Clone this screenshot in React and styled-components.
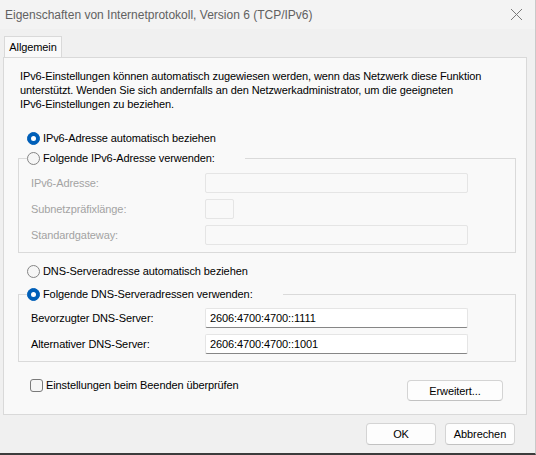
import React from "react";
import styled, { createGlobalStyle } from "styled-components";

const GlobalStyle = createGlobalStyle`
  html, body {
    margin: 0;
    padding: 0;
    background: #f0f0f0;
  }
  body {
    font-family: "Liberation Sans", Arial, sans-serif;
    font-size: 11px;
    letter-spacing: -0.1px;
    color: #000;
  }
`;

const Window = styled.div`
  width: 536px;
  height: 455px;
  box-sizing: border-box;
  background: #f0f0f0;
  display: flex;
  flex-direction: column;
  border-right: 1px solid #c9c9c9;
  border-bottom: 2px solid #3c3c3c;
  overflow: hidden;
`;

const TitleBar = styled.div`
  height: 29px;
  flex-shrink: 0;
  display: flex;
  align-items: center;
  justify-content: space-between;
  padding: 0 12px 0 5px;
  background: #f3f3f3;
  color: #616161;
  font-size: 12px;
  letter-spacing: 0;
`;

const CloseButton = styled.div`
  width: 14px;
  height: 14px;
  display: flex;
  align-items: center;
  justify-content: center;
`;

const Body = styled.div`
  padding: 7px 8px 0 3px;
  display: flex;
  flex-direction: column;
`;

const TabStrip = styled.div`
  display: flex;
  padding-left: 1px;
  height: 21px;
`;

const Tab = styled.div`
  position: relative;
  z-index: 1;
  width: 58px;
  height: 21px;
  display: flex;
  align-items: center;
  justify-content: center;
  background: #f9f9f9;
  border: 1px solid #d9d9d9;
  border-bottom: none;
  box-sizing: border-box;
  margin-bottom: -1px;
`;

const Panel = styled.div`
  height: 358px;
  box-sizing: border-box;
  border: 1px solid #d9d9d9;
  background: #f9f9f9;
  padding: 11px 0 0 14px;
  display: flex;
  flex-direction: column;
`;

const Intro = styled.p`
  margin: 0 0 0 2px;
  line-height: 14px;
  white-space: nowrap;
`;

const OptionRow = styled.label`
  display: flex;
  align-items: center;
  height: 16px;
  gap: 3px;
  margin-top: ${({ $top }) => $top}px;
  margin-left: 9px;
`;

const Radio = styled.span`
  width: 13px;
  height: 13px;
  box-sizing: border-box;
  border-radius: 50%;
  flex-shrink: 0;
  display: flex;
  align-items: center;
  justify-content: center;
  background: ${({ $checked }) => ($checked ? "#005fb8" : "#f6f6f6")};
  border: 1px solid ${({ $checked }) => ($checked ? "#005fb8" : "#858585")};
  &::after {
    content: "";
    display: ${({ $checked }) => ($checked ? "block" : "none")};
    width: 5px;
    height: 5px;
    border-radius: 50%;
    background: #fff;
  }
`;

const Group = styled.fieldset`
  margin: ${({ $top }) => $top}px 0 0 0;
  width: 498px;
  box-sizing: border-box;
  border: 1px solid #dadada;
  padding: ${({ $pt }) => $pt}px 47px ${({ $pb }) => $pb}px 12px;
  display: flex;
  flex-direction: column;
  gap: 6px;
  min-width: 0;
`;

const Legend = styled.legend`
  padding: 0 30px 0 0;
  margin-left: -4px;
  display: flex;
  align-items: center;
  gap: 3px;
  height: 16px;
`;

const FieldRow = styled.div`
  display: flex;
  align-items: center;
  height: 20px;
`;

const FieldLabel = styled.span`
  width: 174px;
  flex-shrink: 0;
  color: ${({ $disabled }) => ($disabled ? "#a3a3a3" : "#000")};
`;

const Input = styled.div`
  width: ${({ $w }) => $w}px;
  height: 20px;
  box-sizing: border-box;
  border-radius: 2px;
  border: 1px solid #e5e5e5;
  display: flex;
  align-items: center;
  padding-left: 4px;
  background: ${({ $disabled }) => ($disabled ? "#f9f9f9" : "#fff")};
  border-bottom-color: ${({ $disabled }) => ($disabled ? "#e5e5e5" : "#868686")};
`;

const BottomRow = styled.div`
  width: 498px;
  margin-top: 15px;
  display: flex;
  justify-content: space-between;
  align-items: flex-start;
`;

const CheckRow = styled.label`
  display: flex;
  align-items: center;
  height: 16px;
  gap: 3px;
  margin-left: 12px;
`;

const Checkbox = styled.span`
  width: 13px;
  height: 13px;
  box-sizing: border-box;
  border: 1px solid #7a7a7a;
  border-radius: 3px;
  background: #f6f6f6;
`;

const Button = styled.button`
  width: ${({ $w }) => $w}px;
  height: ${({ $h }) => $h}px;
  margin: ${({ $m }) => $m || "0"};
  font-family: "Liberation Sans", Arial, sans-serif;
  font-size: 11px;
  letter-spacing: -0.1px;
  color: #000;
  background: #fdfdfd;
  border: 1px solid #d4d4d4;
  border-bottom-color: #c2c2c2;
  border-radius: 4px;
  padding: 0;
`;

const Footer = styled.div`
  display: flex;
  justify-content: flex-end;
  gap: 9px;
  padding: 8px 12px 0 0;
`;

export default function App() {
  return (
    <>
      <GlobalStyle />
      <Window>
        <TitleBar>
          <span>Eigenschaften von Internetprotokoll, Version 6 (TCP/IPv6)</span>
          <CloseButton>
            <svg width="13" height="13" viewBox="0 0 13 13">
              <path d="M1 1 L12 12 M12 1 L1 12" stroke="#7a7a7a" strokeWidth="1" />
            </svg>
          </CloseButton>
        </TitleBar>
        <Body>
          <TabStrip>
            <Tab>Allgemein</Tab>
          </TabStrip>
          <Panel>
            <Intro>
              IPv6-Einstellungen können automatisch zugewiesen werden, wenn das Netzwerk diese Funktion
              <br />
              unterstützt. Wenden Sie sich andernfalls an den Netzwerkadministrator, um die geeigneten
              <br />
              IPv6-Einstellungen zu beziehen.
            </Intro>
            <OptionRow $top={19}>
              <Radio $checked />
              IPv6-Adresse automatisch beziehen
            </OptionRow>
            <Group $top={4} $pt={7} $pb={7}>
              <Legend>
                <Radio />
                Folgende IPv6-Adresse verwenden:
              </Legend>
              <FieldRow>
                <FieldLabel $disabled>IPv6-Adresse:</FieldLabel>
                <Input $disabled $w={263} />
              </FieldRow>
              <FieldRow>
                <FieldLabel $disabled>Subnetzpräfixlänge:</FieldLabel>
                <Input $disabled $w={29} />
              </FieldRow>
              <FieldRow>
                <FieldLabel $disabled>Standardgateway:</FieldLabel>
                <Input $disabled $w={263} />
              </FieldRow>
            </Group>
            <OptionRow $top={10}>
              <Radio />
              DNS-Serveradresse automatisch beziehen
            </OptionRow>
            <Group $top={7} $pt={6} $pb={7}>
              <Legend>
                <Radio $checked />
                Folgende DNS-Serveradressen verwenden:
              </Legend>
              <FieldRow>
                <FieldLabel>Bevorzugter DNS-Server:</FieldLabel>
                <Input $w={263}>2606:4700:4700::1111</Input>
              </FieldRow>
              <FieldRow>
                <FieldLabel>Alternativer DNS-Server:</FieldLabel>
                <Input $w={263}>2606:4700:4700::1001</Input>
              </FieldRow>
            </Group>
            <BottomRow>
              <CheckRow>
                <Checkbox />
                Einstellungen beim Beenden überprüfen
              </CheckRow>
              <Button $w={96} $h={21} $m="3px 13px 0 0">Erweitert...</Button>
            </BottomRow>
          </Panel>
          <Footer>
            <Button $w={70} $h={22}>OK</Button>
            <Button $w={70} $h={22}>Abbrechen</Button>
          </Footer>
        </Body>
      </Window>
    </>
  );
}
